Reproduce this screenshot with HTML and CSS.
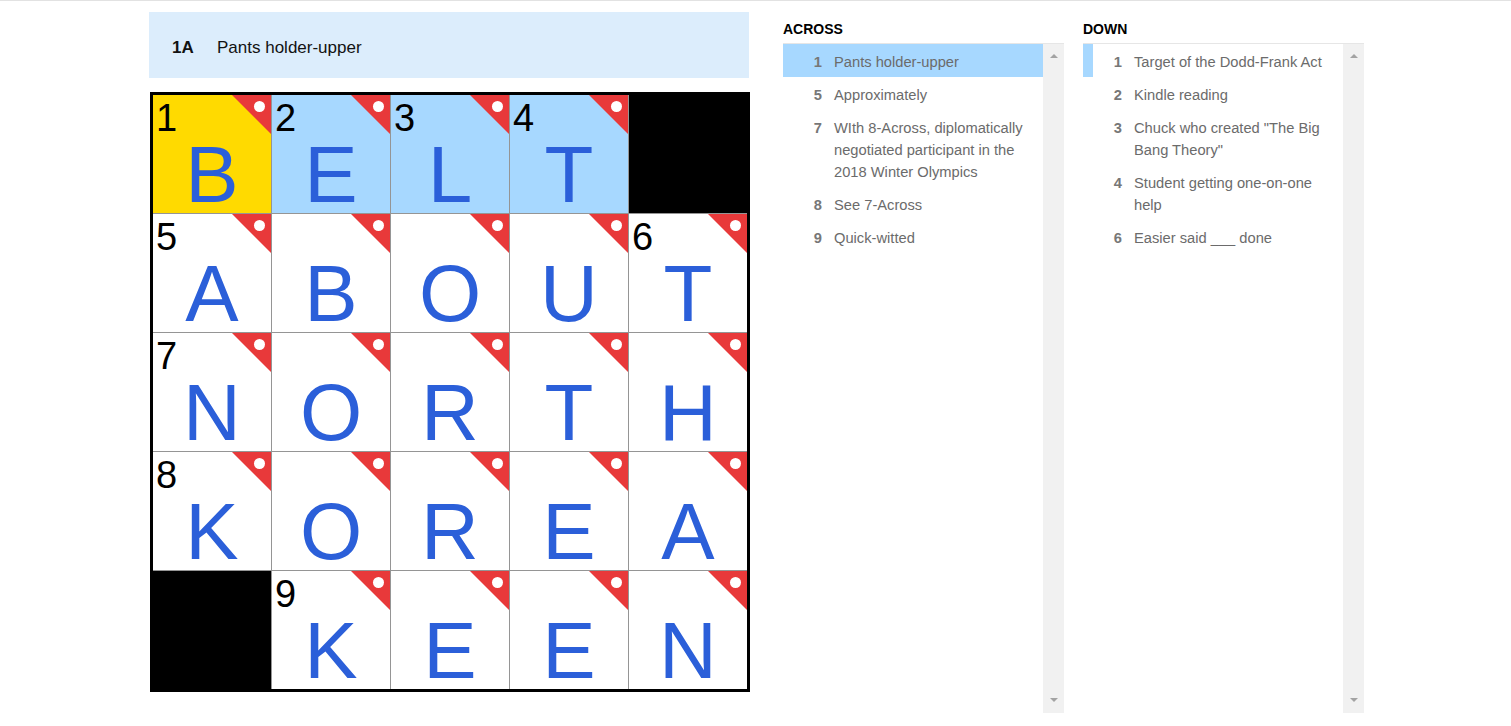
FILE: index.html
```html
<!DOCTYPE html>
<html>
<head>
<meta charset="utf-8">
<link rel="stylesheet" href="styles.css">
</head>
<body>
<div class="topline"></div>
<main class="app">
  <section class="puzzle">
    <div class="clue-bar"><span class="cb-num">1A</span><span class="cb-text">Pants holder-upper</span></div>
    <div class="board">
      <div class="cell sel"><span class="num">1</span><span class="letter">B</span><i class="flag"></i></div>
      <div class="cell word"><span class="num">2</span><span class="letter">E</span><i class="flag"></i></div>
      <div class="cell word"><span class="num">3</span><span class="letter">L</span><i class="flag"></i></div>
      <div class="cell word"><span class="num">4</span><span class="letter">T</span><i class="flag"></i></div>
      <div class="cell black"></div>

      <div class="cell"><span class="num">5</span><span class="letter">A</span><i class="flag"></i></div>
      <div class="cell"><span class="letter">B</span><i class="flag"></i></div>
      <div class="cell"><span class="letter">O</span><i class="flag"></i></div>
      <div class="cell"><span class="letter">U</span><i class="flag"></i></div>
      <div class="cell"><span class="num">6</span><span class="letter">T</span><i class="flag"></i></div>

      <div class="cell"><span class="num">7</span><span class="letter">N</span><i class="flag"></i></div>
      <div class="cell"><span class="letter">O</span><i class="flag"></i></div>
      <div class="cell"><span class="letter">R</span><i class="flag"></i></div>
      <div class="cell"><span class="letter">T</span><i class="flag"></i></div>
      <div class="cell"><span class="letter">H</span><i class="flag"></i></div>

      <div class="cell"><span class="num">8</span><span class="letter">K</span><i class="flag"></i></div>
      <div class="cell"><span class="letter">O</span><i class="flag"></i></div>
      <div class="cell"><span class="letter">R</span><i class="flag"></i></div>
      <div class="cell"><span class="letter">E</span><i class="flag"></i></div>
      <div class="cell"><span class="letter">A</span><i class="flag"></i></div>

      <div class="cell black"></div>
      <div class="cell"><span class="num">9</span><span class="letter">K</span><i class="flag"></i></div>
      <div class="cell"><span class="letter">E</span><i class="flag"></i></div>
      <div class="cell"><span class="letter">E</span><i class="flag"></i></div>
      <div class="cell"><span class="letter">N</span><i class="flag"></i></div>
    </div>
  </section>

  <section class="clues">
    <div class="clue-col">
      <h3 class="clue-head">ACROSS</h3>
      <div class="list-wrap">
        <ol class="list">
          <li class="item active"><span class="n">1</span><span class="t">Pants holder-upper</span></li>
          <li class="item"><span class="n">5</span><span class="t">Approximately</span></li>
          <li class="item"><span class="n">7</span><span class="t">WIth 8-Across, diplomatically negotiated participant in the 2018 Winter Olympics</span></li>
          <li class="item"><span class="n">8</span><span class="t">See 7-Across</span></li>
          <li class="item"><span class="n">9</span><span class="t">Quick-witted</span></li>
        </ol>
        <div class="scroll"><i class="arrow up"></i><i class="arrow down"></i></div>
      </div>
    </div>
    <div class="clue-col">
      <h3 class="clue-head">DOWN</h3>
      <div class="list-wrap">
        <ol class="list">
          <li class="item cross"><span class="n">1</span><span class="t">Target of the Dodd-Frank Act</span></li>
          <li class="item"><span class="n">2</span><span class="t">Kindle reading</span></li>
          <li class="item"><span class="n">3</span><span class="t">Chuck who created "The Big Bang Theory"</span></li>
          <li class="item"><span class="n">4</span><span class="t">Student getting one-on-one help</span></li>
          <li class="item"><span class="n">6</span><span class="t">Easier said ___ done</span></li>
        </ol>
        <div class="scroll"><i class="arrow up"></i><i class="arrow down"></i></div>
      </div>
    </div>
  </section>
</main>
</body>
</html>
```

FILE: styles.css
```css
* { box-sizing: border-box; }
html, body {
  margin: 0;
  padding: 0;
  background: #fff;
  font-family: "Liberation Sans", Arial, sans-serif;
}
.topline {
  height: 1px;
  background: #e2e2e2;
}
.app {
  display: flex;
  padding-left: 149px;
  padding-top: 11px;
  gap: 33px;
}
.puzzle {
  width: 601px;
  display: flex;
  flex-direction: column;
}
.clue-bar {
  width: 600px;
  height: 66px;
  background: #dcedfc;
  display: flex;
  align-items: center;
  padding-left: 23px;
  padding-top: 6px;
  font-size: 17px;
  color: #121212;
}
.cb-num {
  font-weight: bold;
  width: 45px;
}
.board {
  margin-top: 14px;
  margin-left: 1px;
  width: 600px;
  height: 600px;
  border: 3px solid #000;
  background: #959595;
  display: grid;
  grid-template-columns: repeat(5, 1fr);
  grid-template-rows: repeat(5, 1fr);
  gap: 1px;
}
.cell {
  position: relative;
  background: #fff;
}
.cell.sel { background: #ffda00; }
.cell.word { background: #a7d8ff; }
.cell.black { background: #000; }
.num {
  position: absolute;
  left: 3px;
  top: 4px;
  font-size: 38px;
  line-height: 38px;
  color: #000;
}
.letter {
  display: block;
  text-align: center;
  font-size: 80px;
  line-height: 72px;
  height: 72px;
  margin-top: 44px;
  color: #2b5fd9;
}
.flag {
  position: absolute;
  top: 0;
  right: 0;
  width: 39px;
  height: 39px;
  background: #e8393a;
  clip-path: polygon(0 0, 100% 0, 100% 100%);
}
.flag::after {
  content: "";
  position: absolute;
  top: 6px;
  right: 6px;
  width: 11px;
  height: 11px;
  border-radius: 50%;
  background: #fff;
}
.clues {
  display: flex;
  gap: 19px;
}
.clue-col {
  width: 281px;
  display: flex;
  flex-direction: column;
}
.clue-head {
  margin: 0;
  height: 31px;
  padding-top: 9px;
  font-size: 14px;
  line-height: 16px;
  font-weight: bold;
  color: #000;
}
.list-wrap {
  display: flex;
  height: 670px;
  border-top: 1px solid #e6e6e6;
}
.list {
  flex: 1;
  margin: 0;
  padding: 0;
  list-style: none;
}
.item {
  display: flex;
  padding: 6.5px 8px 4.5px 0;
  font-size: 14.7px;
  line-height: 22px;
  color: #6b6b6b;
}
.item.active { background: #a7d8ff; }
.item.cross { border-left: 10px solid #a7d8ff; }
.item.cross .n { width: 29px; }
.n {
  width: 39px;
  flex-shrink: 0;
  text-align: right;
  font-weight: bold;
  margin-right: 12px;
  color: #777;
}
.scroll {
  width: 21px;
  background: #f1f1f1;
  position: relative;
}
.arrow {
  position: absolute;
  left: 7px;
  width: 0;
  height: 0;
  border-left: 4px solid transparent;
  border-right: 4px solid transparent;
}
.arrow.up { top: 10px; border-bottom: 4px solid #a3a3a3; }
.arrow.down { bottom: 11px; border-top: 4px solid #a3a3a3; }
```
